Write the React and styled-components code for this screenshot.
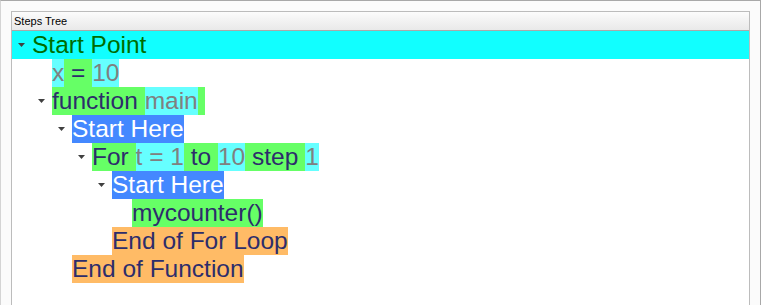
import React from "react";
import styled, {createGlobalStyle} from "styled-components";

const Global = createGlobalStyle`
  html, body {
    margin: 0;
    padding: 0;
    background: #fcfcfc;
  }
`;

const Window = styled.div`
  box-sizing: border-box;
  width: 761px;
  height: 305px;
  background: #fbfbfb;
  border-top: 1px solid #a8a8a8;
  border-right: 1px solid #a8a8a8;
  border-left: 1px solid #d4d4d4;
  padding: 10px 10px 0 10px;
  display: flex;
  overflow: hidden;
`;

const Panel = styled.div`
  flex: 1;
  display: flex;
  flex-direction: column;
  background: #ffffff;
  border: 1px solid #bcbcbc;
  border-bottom: none;
`;

const Header = styled.div`
  height: 18px;
  border-bottom: 1px solid #a9a9a9;
  background: linear-gradient(to bottom, #fcfcfc 0%, #f2f2f2 50%, #e9e9e9 100%);
  font-family: "Liberation Sans", Arial, sans-serif;
  font-size: 11px;
  color: #000;
  line-height: 18px;
  padding-left: 2px;
`;

const Tree = styled.div`
  display: flex;
  flex-direction: column;
  font-family: "Liberation Sans", Arial, sans-serif;
  font-size: 24.5px;
`;

const Row = styled.div`
  display: flex;
  align-items: stretch;
  height: 28px;
  line-height: 28px;
  padding-left: ${(p) => p.level * 20}px;
  background: ${(p) => (p.selected ? "#11ffff" : "transparent")};
  white-space: pre;
`;

const Toggle = styled.span`
  width: 20px;
  flex: none;
  display: flex;
  align-items: center;
  justify-content: flex-start;
  padding-left: 6px;
  box-sizing: border-box;
`;

const Caption = styled.span`
  color: #006c00;
`;

const palette = {
  kw: {bg: "#66ff66", fg: "#2d2d6b"},
  val: {bg: "#66ffff", fg: "#808080"},
  block: {bg: "#4488ff", fg: "#ffffff"},
  end: {bg: "#ffbb66", fg: "#2d2d6b"},
};

const Token = styled.span`
  display: inline-block;
  height: 28px;
  background: ${(p) => palette[p.kind].bg};
  color: ${(p) => palette[p.kind].fg};
`;

function Arrow() {
    return (
        <svg width="7" height="4" viewBox="0 0 7 4">
            <path d="M0 0 H7 L3.5 4 Z" fill="#404040"/>
        </svg>
    );
}

const Nodes = [
    {level: 1, open: false, tokens: [["val", "x"], ["kw", " = "], ["val", "10"]]},
    {level: 1, open: true, tokens: [["kw", "function "], ["val", "main"], ["kw", " "]]},
    {level: 2, open: true, tokens: [["block", "Start Here"]]},
    {level: 3, open: true, tokens: [["kw", "For "], ["val", "t = 1"], ["kw", " to "], ["val", "10"], ["kw", " step "], ["val", "1"]]},
    {level: 4, open: true, tokens: [["block", "Start Here"]]},
    {level: 5, open: false, tokens: [["kw", "mycounter()"]]},
    {level: 4, open: false, tokens: [["end", "End of For Loop"]]},
    {level: 2, open: false, tokens: [["end", "End of Function"]]},
];

export default function App() {
    return (
        <>
            <Global/>
            <Window>
                <Panel>
                    <Header>Steps Tree</Header>
                    <Tree>
                        <Row level={0} selected>
                            <Toggle><Arrow/></Toggle>
                            <Caption>Start Point</Caption>
                        </Row>
                        {Nodes.map((node, index) => (
                            <Row key={index} level={node.level}>
                                <Toggle>{node.open && <Arrow/>}</Toggle>
                                {node.tokens.map((t, i) => (
                                    <Token key={i} kind={t[0]}>{t[1]}</Token>
                                ))}
                            </Row>
                        ))}
                    </Tree>
                </Panel>
            </Window>
        </>
    );
}
